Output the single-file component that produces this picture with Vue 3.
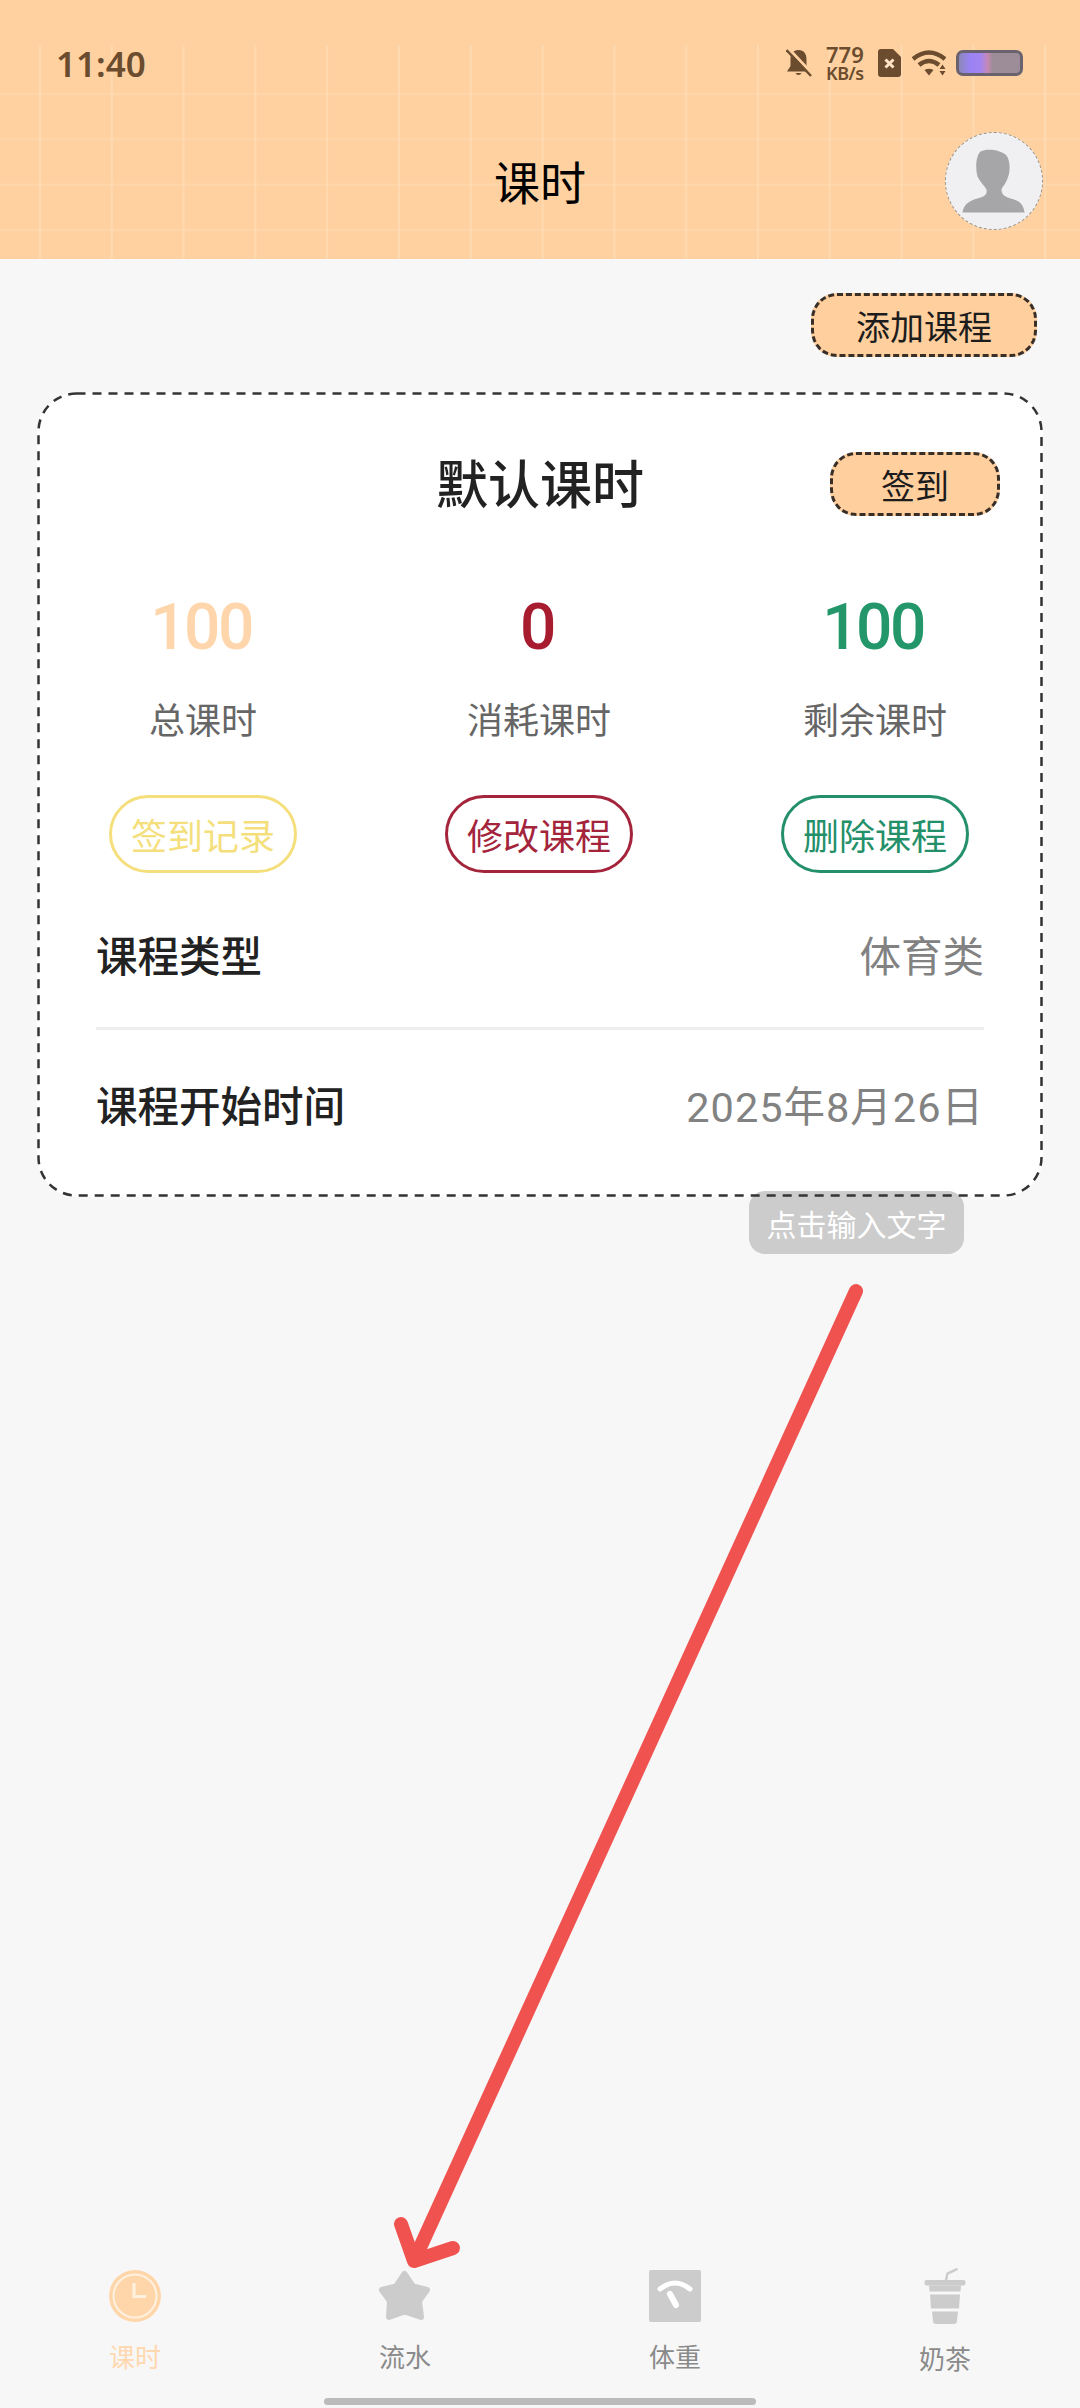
<template>
  <div class="page">
    <header class="header">
      <div class="status-bar">
        <span class="time">11:40</span>
        <div class="status-icons">
          <svg class="bell" width="26" height="28" viewBox="0 0 26 28">
            <path d="M12.500 1C7 1 4.500 5 4.500 10v7L1 22.500h23L20.500 17v-7C20.500 5 18 1 12.500 1z" fill="#6b4c2e" />
            <path d="M9.500 24a3.200 3.200 0 0 0 6 0z" fill="#6b4c2e" />
            <path d="M2.500 -0.500L26.500 25" stroke="#ffd1a0" stroke-width="3" />
            <path d="M0.500 1L25 27" stroke="#6b4c2e" stroke-width="2.500" />
          </svg>
          <div class="speed">
            <span class="speed-num">779</span>
            <span class="speed-unit">KB/s</span>
          </div>
          <svg class="sim" width="23" height="28" viewBox="0 0 23 28">
            <path d="M3 0h12l8 8v17a3 3 0 0 1-3 3H3a3 3 0 0 1-3-3V3a3 3 0 0 1 3-3z" fill="#6b4c2e" />
            <path d="M7.500 10.500l8 8M15.500 10.500l-8 8" stroke="#ffe3c6" stroke-width="3" />
          </svg>
          <svg class="wifi" width="34" height="26" viewBox="0 0 34 26">
            <path d="M1 9Q17-4 33 9" fill="none" stroke="#6b4c2e" stroke-width="4.500" />
            <path d="M7 15Q17 7 27 15" fill="none" stroke="#6b4c2e" stroke-width="4.500" />
            <path d="M12.500 20Q17 17.500 21.500 20L17 25.500z" fill="#6b4c2e" />
            <path d="M30.500 14.500l3 4.500h-6zM27.500 21h6l-3 4.500z" fill="#6b4c2e" />
          </svg>
          <div class="battery"></div>
        </div>
      </div>
      <div class="title-row">
        <h1 class="title">课时</h1>
        <div class="avatar">
          <svg width="95" height="95" viewBox="1.500 1.500 95 95">
            <path
              class="person"
              d="M36 20C42 17 56 18 62 24C66 30 66 40 63 47C61 53 58 55 57 58C57 63 60 65 66 67C74 69 79 72 80 81L18 81C19 73 25 69 33 67C40 65 43 63 42 58C40 54 35 50 33 45C31 38 31 25 36 20Z"
            />
          </svg>
        </div>
      </div>
    </header>

    <main class="content">
      <div class="add-row">
        <button class="dash-btn add-btn">添加课程</button>
      </div>

      <section class="card">
        <div class="card-head">
          <h2 class="card-title">默认课时</h2>
          <button class="dash-btn sign-btn">签到</button>
        </div>

        <div class="stats">
          <div v-for="stat in stats" :key="stat.label" class="stat">
            <div class="stat-num" :style="{ color: stat.color }">{{ stat.value }}</div>
            <div class="stat-label">{{ stat.label }}</div>
            <button class="outline-btn" :style="{ color: stat.btnColor, borderColor: stat.btnColor }">
              {{ stat.action }}
            </button>
          </div>
        </div>

        <div class="info-row first">
          <span class="info-name">课程类型</span>
          <span class="info-value">体育类</span>
        </div>
        <div class="line"></div>
        <div class="info-row">
          <span class="info-name">课程开始时间</span>
          <span class="info-value date">2025年8月26日</span>
        </div>

        <div class="hint">点击输入文字</div>

        <svg class="card-border" width="1006" height="805">
          <rect x="1.500" y="1.500" width="1003" height="802" rx="38" fill="none" stroke="#333" stroke-width="2.500" stroke-dasharray="9 7" />
        </svg>
      </section>
    </main>

    <nav class="tabbar">
      <div v-for="tab in tabs" :key="tab.label" class="tab" :class="{ active: tab.active, low: tab.low }">
        <div class="tab-icon">
          <svg v-if="tab.icon === 'clock'" width="52" height="52" viewBox="0 0 52 52">
            <circle cx="26" cy="26" r="26" fill="#ffd6aa" />
            <circle cx="26" cy="26" r="21.500" fill="none" stroke="#fff1e0" stroke-width="2" />
            <path d="M25 13v13.500h12" fill="none" stroke="#fff1e0" stroke-width="3" />
          </svg>
          <svg v-else-if="tab.icon === 'star'" width="54" height="52" viewBox="0 0 54 52">
            <path
              d="M26.500 4L35 16.500 49 20 41 31 43 47 26.500 41.500 11 47 12 31 4 20 18 16.500z"
              fill="#ccc"
              stroke="#ccc"
              stroke-width="6"
              stroke-linejoin="round"
            />
          </svg>
          <svg v-else-if="tab.icon === 'scale'" width="52" height="52" viewBox="0 0 52 52">
            <rect width="52" height="52" rx="2" fill="#ccc" />
            <path d="M11 19Q26 7 41 19" fill="none" stroke="#fff" stroke-width="5" stroke-linecap="round" />
            <path d="M21 24L27 35" stroke="#fff" stroke-width="6" stroke-linecap="round" />
          </svg>
          <svg v-else width="42" height="56" viewBox="0 0 42 56">
            <path d="M22 12L23.500 5.500L33.500 0.800" fill="none" stroke="#ccc" stroke-width="2.500" />
            <rect x="0.500" y="12" width="41" height="5.500" rx="2" fill="#ccc" />
            <path d="M5 17.500H37L36.500 23.500H5.500z" fill="#ccc" />
            <path d="M6 26.500H36L35 40.500H7z" fill="#ccc" />
            <path d="M8 43.500H34L33 53a3 3 0 0 1-3 3H12a3 3 0 0 1-3-3z" fill="#ccc" />
          </svg>
        </div>
        <span class="tab-label">{{ tab.label }}</span>
      </div>
    </nav>
    <div class="home-bar"></div>

    <svg class="arrow" width="1080" height="2408">
      <g fill="none" stroke="#f0524f" stroke-linecap="round" stroke-linejoin="round">
        <path d="M856 1291L418 2252" stroke-width="14" />
        <path d="M401 2224L414 2261L453 2248" stroke-width="14" />
      </g>
    </svg>
  </div>
</template>

<script setup>
const stats = [
  { value: 100, label: '总课时', action: '签到记录', color: '#ffd6ab', btnColor: '#f5df7c' },
  { value: 0, label: '消耗课时', action: '修改课程', color: '#a81c30', btnColor: '#a3243b' },
  { value: 100, label: '剩余课时', action: '删除课程', color: '#23966a', btnColor: '#23906a' }
]

const tabs = [
  { label: '课时', icon: 'clock', active: true },
  { label: '流水', icon: 'star' },
  { label: '体重', icon: 'scale' },
  { label: '奶茶', icon: 'cup', low: true }
]
</script>

<style>
html,
body {
  margin: 0;
  background: #f7f7f7;
}
</style>

<style scoped>
.page {
  position: relative;
  display: flex;
  flex-direction: column;
  width: 1080px;
  height: 2408px;
  overflow: hidden;
  background: #f7f7f7;
  font-family: Roboto, "Noto Sans CJK SC", sans-serif;
}

.header {
  position: relative;
  flex: none;
  height: 259px;
  background: #ffd1a0;
}

.header::before {
  content: "";
  position: absolute;
  left: 0;
  right: 0;
  top: 45px;
  bottom: 0;
  background-image: linear-gradient(90deg, rgba(255, 232, 205, 0.35) 2px, transparent 2px);
  background-size: 71.8px 100%;
  background-position: 39px 0;
}

.header::after {
  content: "";
  position: absolute;
  left: 0;
  right: 0;
  top: 93px;
  height: 140px;
  background-image: linear-gradient(180deg, rgba(255, 232, 205, 0.22) 2px, transparent 2px);
  background-size: 100% 45.300px;
}

.status-bar {
  position: relative;
  z-index: 1;
  display: flex;
  justify-content: space-between;
  align-items: center;
  height: 38px;
  padding: 44px 57px 0 56px;
}

.time {
  font-family: "Noto Sans", sans-serif;
  font-size: 35px;
  font-weight: 600;
  color: #6b4c2e;
}

.status-icons {
  display: flex;
  align-items: center;
}

.bell {
  margin-right: 14px;
}

.speed {
  display: flex;
  flex-direction: column;
  width: 38px;
  margin-right: 14px;
  color: #6b4c2e;
  font-family: "Noto Sans", sans-serif;
  font-weight: 600;
}

.speed-num {
  font-size: 22px;
  line-height: 20px;
}

.speed-unit {
  font-size: 18px;
  line-height: 18px;
  white-space: nowrap;
  letter-spacing: -0.5px;
}

.sim {
  margin-right: 11px;
}

.wifi {
  margin-right: 10px;
}

.battery {
  box-sizing: border-box;
  width: 67px;
  height: 26px;
  border: 3px solid #6b6270;
  border-radius: 7px;
  background: linear-gradient(90deg, #8b88b8 0%, #9a82f5 18%, #a385ee 36%, #c888b4 47%, #9c8d98 55%, #9c8d98 100%);
}

.title-row {
  position: relative;
  z-index: 1;
  display: grid;
  grid-template-columns: 1fr auto 1fr;
  align-items: center;
  margin-top: 50px;
  padding: 0 37px;
}

.title {
  grid-column: 2;
  margin: 6px 0 0;
  font-size: 46px;
  font-weight: 400;
  line-height: 60px;
  color: #000;
}

.avatar {
  grid-column: 3;
  justify-self: end;
  box-sizing: border-box;
  width: 98px;
  height: 98px;
  border: 1.500px dashed #9c9489;
  border-radius: 50%;
  background: #f0f0f2;
}

.avatar svg {
  display: block;
}

.person {
  fill: #a6a6a8;
}

.content {
  flex: 1;
  padding: 34px 37px 0;
}

.add-row {
  display: flex;
  justify-content: flex-end;
  padding-right: 6px;
}

.dash-btn {
  box-sizing: border-box;
  height: 64px;
  padding: 0;
  border: 3px dashed #3a2f26;
  border-radius: 26px;
  background: #ffcf9e;
  font-family: inherit;
  font-size: 34px;
  color: #1c1c1c;
}

.add-btn {
  width: 226px;
}

.card {
  position: relative;
  box-sizing: border-box;
  width: 1006px;
  height: 805px;
  margin-top: 35px;
  padding-top: 60px;
  border-radius: 40px;
  background: #fff;
}

.card-head {
  display: grid;
  grid-template-columns: 1fr auto 1fr;
  grid-template-rows: 64px;
  align-items: start;
  height: 64px;
  padding: 0 43px;
}

.card-title {
  grid-column: 2;
  margin: 3px 0 0;
  font-size: 52px;
  font-weight: 500;
  line-height: 64px;
  color: #222;
}

.sign-btn {
  grid-column: 3;
  justify-self: end;
  width: 170px;
}

.stats {
  display: grid;
  grid-template-columns: repeat(3, 1fr);
  margin-top: 80px;
  margin-left: -2px;
}

.stat {
  display: flex;
  flex-direction: column;
  align-items: center;
}

.stat-num {
  padding-right: 4px;
  font-size: 64px;
  font-weight: 500;
  line-height: 64px;
  letter-spacing: -2.500px;
}

.stat-label {
  margin-top: 37px;
  font-size: 36px;
  line-height: 50px;
  color: #666;
}

.outline-btn {
  box-sizing: border-box;
  width: 188px;
  height: 78px;
  margin-top: 48px;
  padding: 0;
  border: 3px solid;
  border-radius: 39px;
  background: #fff;
  font-family: inherit;
  font-size: 36px;
}

.info-row {
  display: flex;
  justify-content: space-between;
  align-items: center;
  height: 148px;
  padding: 0 59px;
  font-size: 41.500px;
}

.info-row.first {
  height: 146px;
  margin-top: 8px;
}

.info-name {
  font-weight: 500;
  color: #222;
}

.info-value {
  color: #828282;
}

.info-value.date {
  letter-spacing: 1px;
}

.line {
  height: 3px;
  margin: 0 59px;
  background: #eee;
}

.hint {
  position: absolute;
  top: 799px;
  right: 79px;
  z-index: 1;
  display: flex;
  justify-content: center;
  align-items: center;
  width: 215px;
  height: 63px;
  border-radius: 16px;
  background: #ccc;
  font-size: 30px;
  color: #fff;
}

.card-border {
  position: absolute;
  top: 0;
  left: 0;
  z-index: 2;
  pointer-events: none;
}

.tabbar {
  display: grid;
  grid-template-columns: repeat(4, 270px);
  flex: none;
  height: 130px;
}

.tab {
  display: flex;
  flex-direction: column;
  align-items: center;
  color: #8a8a8a;
}

.tab.active {
  color: #ffd8b0;
}

.tab-icon {
  display: flex;
  justify-content: center;
  align-items: center;
  height: 56px;
}

.tab-icon svg {
  display: block;
}

.tab-label {
  margin-top: 19px;
  font-size: 26px;
  line-height: 30px;
}

.tab.low .tab-label {
  margin-top: 21px;
}

.home-bar {
  flex: none;
  width: 432px;
  height: 7px;
  margin: 0 auto 3px;
  border-radius: 4px;
  background: #bbb;
}

.arrow {
  position: absolute;
  top: 0;
  left: 0;
  pointer-events: none;
}
</style>
